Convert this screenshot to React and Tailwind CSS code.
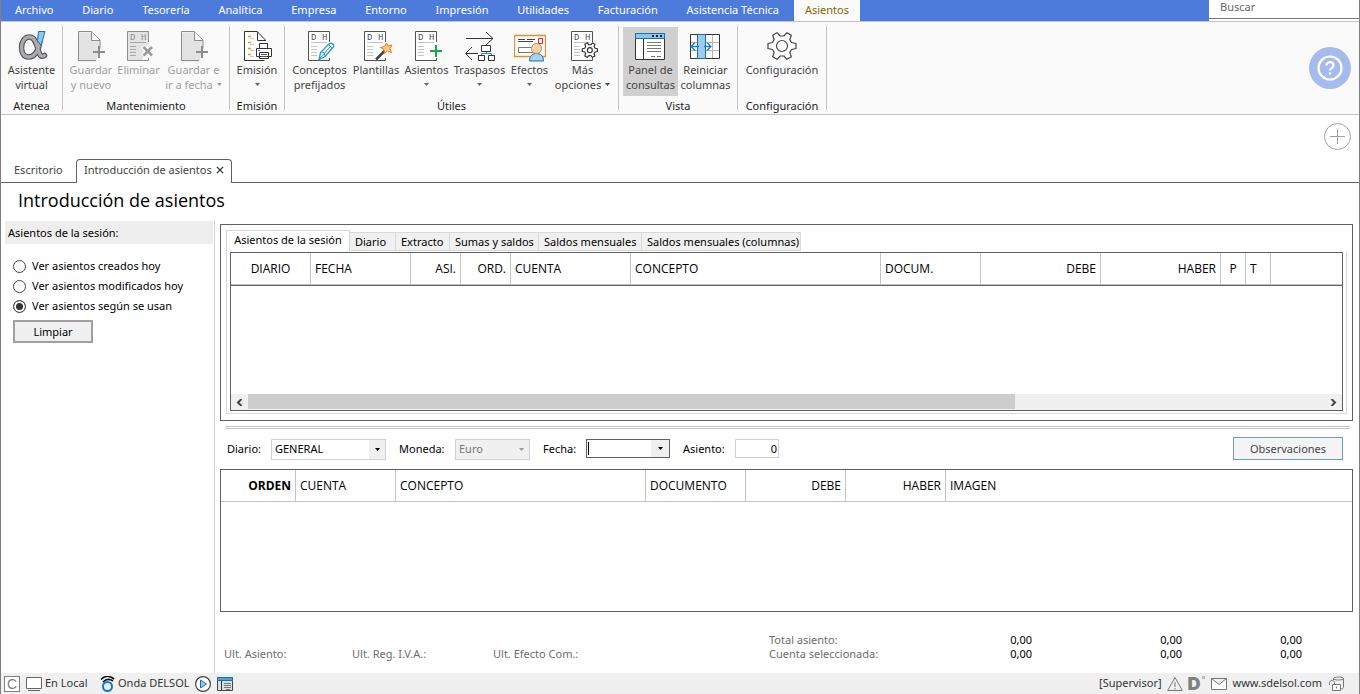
import React from 'react';

const menus = [
  'Archivo', 'Diario', 'Tesorería', 'Analítica', 'Empresa', 'Entorno',
  'Impresión', 'Utilidades', 'Facturación', 'Asistencia Técnica',
];

/* ---------- Ribbon icons ---------- */

function Svg({ children, size = 'w-8 h-8', box = '0 0 32 32' }) {
  return (
    <svg className={`${size} shrink-0`} viewBox={box} fill="none" aria-hidden="true">
      {children}
    </svg>
  );
}

const RIBBON_LOOP = 'M24 11c-1.500 9-5 16-11.500 16-4.500 0-7-3.800-7-9.500s3-10.500 8-10.500c6 0 7.500 8.500 9.500 15.500 .8 3 2.500 5 5.500 3';

function AlphaIcon() {
  return (
    <Svg>
      <path d={RIBBON_LOOP} stroke="#55565a" strokeWidth="5.500" strokeLinecap="round" />
      <path d={RIBBON_LOOP} stroke="#a9abad" strokeWidth="3.300" strokeLinecap="round" />
      <path d="M22.500 1.500h6.500l-4 14-3.500-5z" fill="#8fc8f0" stroke="#1a6fb0" />
    </Svg>
  );
}

function SavePageIcon() {
  return (
    <Svg>
      <path d="M24.500 19V10.500l-8-8H3.500v29h18" fill="#e3e3e3" />
      <path d="M25 18.500V10L16.500 1.500H3.500v29H21" stroke="#8c8c8c" />
      <path d="M16.500 1.500V10.500H25" fill="#fafafa" stroke="#8c8c8c" />
      <path d="M24 16v12M18 22h12" stroke="#8c8c8c" strokeWidth="2" />
    </Svg>
  );
}

/* Ledger sheet with the D / H header, shared by several buttons */
function Ledger({ stroke = '#505050', fill = '#ffffff', lines = '#c4c4c4' }) {
  return (
    <>
      <path d="M25.500 14V1.500h-21v29H19" fill={fill} />
      <path d="M25.500 12V1.500h-21v29h21V28" stroke={stroke} />
      <text x="7" y="10" fontSize="9" fill={stroke} className="font-['Liberation_Mono',monospace]">D</text>
      <text x="18" y="10" fontSize="9" fill={stroke} className="font-['Liberation_Mono',monospace]">H</text>
      <path d="M7 12.500h16M7 16.500h6M7 19.500h6M7 22.500h6M7 25.500h6" stroke={lines} />
    </>
  );
}

function DeleteIcon() {
  return (
    <Svg>
      <Ledger stroke="#8f8f8f" fill="#e3e3e3" lines="#a8a8a8" />
      <path d="M20 16.500l9 9M29 16.500l-9 9" stroke="#fafafa" strokeWidth="5" />
      <path d="M20.500 17l8.500 8.500M29 17l-8.500 8.500" stroke="#9a9a9a" strokeWidth="2.500" />
    </Svg>
  );
}

function PrintIcon() {
  return (
    <Svg>
      <path d="M24.500 12V10l-8.500-8.500H3.500v29h12" fill="#fff" />
      <path d="M24.500 11V10L16 1.500H3.500v29h20" stroke="#333" />
      <path d="M16.500 1.500V10.500h8" stroke="#333" />
      <path d="M7 6.500h3M7 12.500h3M7 18.500h3M7 24.500h3" stroke="#f0971d" strokeWidth="1.500" />
      <path d="M9 8.500h4M9 14.500h4M9 20.500h4M9 26.500h4" stroke="#c8c8c8" />
      <path d="M18.500 18v-4.500h8V18M15.500 18.500h15v8h-15zM18.500 22.500h9v6h-9z" fill="#fff" stroke="#333" />
      <path d="M17 20.500h2" stroke="#2a7fd0" />
      <path d="M20 24.500h6M20 26.500h6" stroke="#555" />
    </Svg>
  );
}

function ConceptsIcon() {
  return (
    <Svg>
      <Ledger />
      <path d="M15 29.500l1.500-7L25 14c2-2 5.500 0 4.500 3L21 26.500z" fill="#fff" stroke="#1e9bd7" strokeWidth="1.300" />
      <path d="M16 28l10.500-11.500M17 22l3 .5 1 3.500M24.500 14.500l4 4" stroke="#1e9bd7" />
    </Svg>
  );
}

function WandIcon() {
  return (
    <Svg>
      <Ledger />
      <path d="M16 29.500l9.500-9.500" stroke="#444" strokeWidth="2.500" />
      <path d="M26.500 13l1.500 3 4-1-2 3.500 1.500 4-4-1.500-3 2.500-.5-4-3.500-2 4-1z" fill="#fbc98a" stroke="#e8791c" />
    </Svg>
  );
}

function EntryIcon() {
  return (
    <Svg>
      <Ledger />
      <path d="M25 15v12M19 21h12" stroke="#17a84a" strokeWidth="2" />
    </Svg>
  );
}

function TransferIcon() {
  return (
    <Svg>
      <path d="M2 8.500h27M22 2l7 6.500-7 6.500M14 23.500H2M8 17l-6.500 6.500L8 30" stroke="#333" />
      <path d="M22.500 21v3M17.500 25v-1.500h10V25" stroke="#1e8fd7" />
      <path d="M17.500 15.500h9v6h-9zM14.500 25.500h6v5h-6zM24.500 25.500h6v5h-6z" fill="#fff" stroke="#333" />
    </Svg>
  );
}

function EffectsIcon() {
  return (
    <Svg>
      <path d="M.5 5.500h31v21H.5z" fill="#fff" stroke="#e88a34" strokeWidth="1.300" />
      <path d="M4 9.500h7M4 11.500h15M13 9.500h8" stroke="#444" />
      <path d="M4.500 17.500h14v5h-14z" stroke="#777" />
      <path d="M24.500 8.500h4v5h-4z" stroke="#e02424" />
      <path d="M15.500 31c0-5 3-7.500 7-7.500s7 2.500 7 7.500z" fill="#a9d1f2" stroke="#1d6dab" />
      <circle cx="22.500" cy="18.500" r="5" fill="#fbd5ae" stroke="#dc8536" />
    </Svg>
  );
}

const GEAR = 'M13.500 2h5l1 4.500 3 1.700 4.300-1.500 2.500 4.300-3.300 3.200v3.600l3.300 3.200-2.500 4.300-4.300-1.500-3 1.700-1 4.500h-5l-1-4.500-3-1.700-4.300 1.500L2.700 21 6 17.800v-3.600L2.700 11l2.500-4.300 4.300 1.500 3-1.700z';

function OptionsIcon() {
  return (
    <Svg>
      <Ledger />
      <g transform="translate(31.500 11.500) scale(.54) rotate(90)">
        <path d={GEAR} fill="#fff" stroke="#333" strokeWidth="2.200" strokeLinejoin="round" />
        <circle cx="16" cy="16" r="4.500" stroke="#333" strokeWidth="2.200" />
      </g>
    </Svg>
  );
}

function PanelIcon({ size = 'w-8 h-8' }) {
  return (
    <Svg size={size}>
      <path d="M.5 3.500h29v26h-29z" fill="#fff" stroke="#333" />
      <path d="M.5 3.500h29v5h-29z" fill="#8cc5ee" stroke="#1a6fb0" />
      <path d="M17 6h2M21 6h2M25 6h2" stroke="#222" strokeWidth="2" />
      <path d="M8.500 9v20" stroke="#333" />
      <path d="M12 12.500h14M12 15.500h14M12 18.500h14M12 21.500h14M16 26.500h4M22 26.500h4" stroke="#777" />
    </Svg>
  );
}

function ColumnsIcon() {
  return (
    <Svg>
      <path d="M.5 4.500h29v24h-29z" fill="#fff" />
      <path d="M1 12.500h28M1 20.500h28M22.500 4v25" stroke="#b5b5b5" />
      <path d="M.5 4.500h29v24h-29z" stroke="#333" />
      <path d="M7.500 4.500h8v24h-8z" fill="#9ccbf0" stroke="#1a6fb0" />
      <path d="M9 16.500H2M5 12.500l-4 4 4 4M14 16.500h7M17 12.500l4 4-4 4" stroke="#1583cc" strokeWidth="1.300" />
    </Svg>
  );
}

function GearIcon() {
  return (
    <Svg>
      <path d={GEAR} transform="rotate(90 16 16)" fill="#fff" stroke="#444" strokeWidth="1.200" strokeLinejoin="round" />
      <circle cx="16" cy="16" r="5.500" stroke="#444" strokeWidth="1.200" />
    </Svg>
  );
}

function Caret({ className = '' }) {
  return (
    <svg className={`inline-block w-[5px] h-[3px] ${className}`} viewBox="0 0 5 3" aria-hidden="true">
      <path d="M0 0h5L2.500 3z" fill="currentColor" />
    </svg>
  );
}

/* ---------- Ribbon ---------- */

const groups = [
  { name: 'Atenea', items: [{ lines: ['Asistente', 'virtual'], icon: AlphaIcon, width: 'w-[53px]' }] },
  {
    name: 'Mantenimiento',
    items: [
      { lines: ['Guardar', 'y nuevo'], icon: SavePageIcon, width: 'w-12', disabled: true },
      { lines: ['Eliminar'], icon: DeleteIcon, width: 'w-[47px]', disabled: true },
      { lines: ['Guardar e', 'ir a fecha'], icon: SavePageIcon, width: 'w-[63px]', disabled: true, caret: true },
    ],
  },
  { name: 'Emisión', items: [{ lines: ['Emisión', ''], icon: PrintIcon, width: 'w-[46px]', caret: true }] },
  {
    name: 'Útiles',
    items: [
      { lines: ['Conceptos', 'prefijados'], icon: ConceptsIcon, width: 'w-[61px]' },
      { lines: ['Plantillas'], icon: WandIcon, width: 'w-[52px]' },
      { lines: ['Asientos', ''], icon: EntryIcon, width: 'w-[49px]', caret: true },
      { lines: ['Traspasos', ''], icon: TransferIcon, width: 'w-[57px]', caret: true },
      { lines: ['Efectos', ''], icon: EffectsIcon, width: 'w-[43px]', caret: true },
      { lines: ['Más', 'opciones'], icon: OptionsIcon, width: 'w-[63px]', caret: true },
    ],
  },
  {
    name: 'Vista',
    items: [
      { lines: ['Panel de', 'consultas'], icon: PanelIcon, width: 'w-[55px]', active: true },
      { lines: ['Reiniciar', 'columnas'], icon: ColumnsIcon, width: 'w-[55px]' },
    ],
  },
  { name: 'Configuración', items: [{ lines: ['Configuración'], icon: GearIcon, width: 'w-20' }] },
];

function RibbonButton({ item }) {
  const Icon = item.icon;
  return (
    <button
      type="button"
      disabled={item.disabled}
      className={`${item.width} h-[69px] flex flex-col items-center pt-[3px] ${
        item.active ? 'bg-[#d0d0d0]' : ''
      } ${item.disabled ? 'text-[#a0a0a0]' : 'text-[#444]'}`}
    >
      <Icon />
      {item.lines.map((line, i) => (
        <span key={i} className="flex items-center h-[15px] leading-[15px] whitespace-nowrap">
          {line}
          {item.caret && i === 1 && <Caret className={line ? 'ml-1' : 'text-[#666]'} />}
        </span>
      ))}
    </button>
  );
}

function Ribbon() {
  return (
    <div className="flex items-center bg-[#fafafa] border-y border-[#c3c3c3]">
      <div className="flex py-1">
        {groups.map((group) => (
          <section key={group.name} className="px-1 pt-px border-r border-[#c3c3c3]">
            <div className="flex">
              {group.items.map((item) => (
                <RibbonButton key={item.lines.join(' ')} item={item} />
              ))}
            </div>
            <h2 className="h-[14px] leading-5 text-center text-[#222]">{group.name}</h2>
          </section>
        ))}
      </div>
      <button
        type="button"
        aria-label="Ayuda"
        className="ml-auto mr-2 w-[42px] h-[42px] rounded-full bg-[#a4bbec] flex items-center justify-center"
      >
        <Svg size="w-7 h-7" box="0 0 28 28">
          <circle cx="14" cy="14" r="11.500" stroke="#fff" strokeWidth="2.200" />
          <path d="M10.500 11.500c0-4.500 7-4.500 7 0 0 2.500-3.500 2.500-3.500 5" stroke="#fff" strokeWidth="2.200" />
          <circle cx="14" cy="19.500" r="1.300" fill="#fff" />
        </Svg>
      </button>
    </div>
  );
}

function MenuBar() {
  return (
    <div className="flex h-[21px] bg-[#4d7bdc]">
      <nav className="flex w-[859px]">
        {menus.map((menu) => (
          <a key={menu} href="#" className="grow pl-[13px] pr-[14px] leading-[20px] text-center text-white whitespace-nowrap">
            {menu}
          </a>
        ))}
        <a href="#" className="px-[11px] leading-[20px] bg-[#fafafa] text-[#8a6500] whitespace-nowrap">
          Asientos
        </a>
      </nav>
      <div className="ml-auto w-[150px] bg-white">
        <input
          type="text"
          aria-label="Buscar"
          placeholder="Buscar"
          className="block w-full h-[19px] px-[11px] pb-[5px] border-b border-[#777] placeholder:text-[#666] outline-none"
        />
      </div>
    </div>
  );
}

function DocumentTabs() {
  return (
    <div className="pt-2">
      <div className="flex justify-end pr-2">
        <button type="button" aria-label="Añadir">
          <Svg size="w-[27px] h-[27px]" box="0 0 27 27">
            <circle cx="13.500" cy="13.500" r="13" stroke="#a0a0a0" />
            <path d="M13.500 6v15M6 13.500h15" stroke="#a0a0a0" />
          </Svg>
        </button>
      </div>
      <div className="flex mt-[9px] text-[#444]">
        <a href="#" className="w-[75px] pl-[13px] leading-[22px] border-b border-[#606060]">Escritorio</a>
        <div className="flex items-center h-6 px-[7px] pb-[3px] gap-1 border border-b-0 border-[#606060] rounded-t-[4px]">
          <span className="whitespace-nowrap">Introducción de asientos</span>
          <button type="button" aria-label="Cerrar">
            <Svg size="w-2 h-2" box="0 0 9 9">
              <path d="M1 1l7 7M8 1L1 8" stroke="#333" strokeWidth="1.500" />
            </Svg>
          </button>
        </div>
        <div className="flex-1 border-b border-[#606060]" />
      </div>
    </div>
  );
}

/* ---------- Session panel ---------- */

function Sidebar() {
  const options = ['Ver asientos creados hoy', 'Ver asientos modificados hoy', 'Ver asientos según se usan'];
  return (
    <aside className="w-[214px] shrink-0 pl-1 border-r border-[#d5d5d5] text-black">
      <h2 className="h-[23px] pl-[3px] mr-px leading-[23px] bg-[#eee]">Asientos de la sesión:</h2>
      <div className="pl-2 pt-3">
        {options.map((option, i) => (
          <label key={option} className="flex items-center h-5 gap-[6px]">
            <input
              type="radio"
              name="sesion"
              defaultChecked={i === 2}
              className="appearance-none w-[13px] h-[13px] rounded-full border border-[#444] bg-white checked:bg-[#333] checked:shadow-[inset_0_0_0_2px_white]"
            />
            {option}
          </label>
        ))}
        <button type="button" className="w-20 h-[23px] mt-1 pt-px border-2 border-[#a0a0a0] bg-[#f0f0f0]">
          Limpiar
        </button>
      </div>
    </aside>
  );
}

const queryTabs = [
  { name: 'Diario', width: 'w-[46px]' },
  { name: 'Extracto', width: 'w-[54px]' },
  { name: 'Sumas y saldos', width: 'w-[89px]' },
  { name: 'Saldos mensuales', width: 'w-[103px]' },
  { name: 'Saldos mensuales (columnas)', width: 'w-[159px]' },
];

const queryColumns = [
  { name: 'DIARIO', width: 'w-20', align: 'text-center' },
  { name: 'FECHA', width: 'w-[100px]', align: 'text-left' },
  { name: 'ASI.', width: 'w-[50px]', align: 'text-right' },
  { name: 'ORD.', width: 'w-[50px]', align: 'text-right' },
  { name: 'CUENTA', width: 'w-[120px]', align: 'text-left' },
  { name: 'CONCEPTO', width: 'w-[250px]', align: 'text-left' },
  { name: 'DOCUM.', width: 'w-[100px]', align: 'text-left' },
  { name: 'DEBE', width: 'w-[120px]', align: 'text-right' },
  { name: 'HABER', width: 'w-[120px]', align: 'text-right' },
  { name: 'P', width: 'w-[25px]', align: 'text-center' },
  { name: 'T', width: 'w-[25px]', align: 'text-left' },
];

const entryColumns = [
  { name: 'ORDEN', width: 'w-[75px]', align: 'text-right', bold: true },
  { name: 'CUENTA', width: 'w-[100px]', align: 'text-left' },
  { name: 'CONCEPTO', width: 'w-[250px]', align: 'text-left' },
  { name: 'DOCUMENTO', width: 'w-[100px]', align: 'text-left' },
  { name: 'DEBE', width: 'w-[100px]', align: 'text-right' },
  { name: 'HABER', width: 'w-[100px]', align: 'text-right' },
];

function HeaderTable({ columns, last }) {
  return (
    <table className="w-full table-fixed border-separate border-spacing-0 text-xs text-black font-['Open_Sans','Noto_Sans',sans-serif]">
      <thead>
        <tr>
          {columns.map((col) => (
            <th
              key={col.name}
              className={`${col.width} ${col.align} ${col.bold ? 'font-bold' : 'font-normal'} h-8 px-1 border-r border-b border-[#c3c3c3]`}
            >
              {col.name}
            </th>
          ))}
          <th className="h-8 px-1 border-b border-[#c3c3c3] text-left font-normal">{last}</th>
        </tr>
      </thead>
    </table>
  );
}

function QueryPanel() {
  return (
    <section className="border border-[#606060] px-[5px] pt-[5px] pb-[6px]">
      <div className="flex items-end text-black">
        <button type="button" className="w-[124px] h-[21px] pb-px border border-b-0 border-[#d5d5d5] bg-white whitespace-nowrap">
          Asientos de la sesión
        </button>
        {queryTabs.map((tab) => (
          <button
            key={tab.name}
            type="button"
            className={`${tab.width} h-[19px] pl-[5px] pt-px text-left whitespace-nowrap bg-[#f0f0f0] border border-l-0 border-[#d9d9d9]`}
          >
            {tab.name}
          </button>
        ))}
      </div>
      <div className="p-[3px] pb-[2px] pt-px border-x border-b border-[#d9d9d9]">
        <div className="border border-[#606060]">
          <div className="border-b border-[#606060]">
            <HeaderTable columns={queryColumns} />
          </div>
          <div className="h-[108px] bg-white" />
          <div className="flex items-center h-4 bg-[#f0f0f0]">
            <button type="button" aria-label="Desplazar a la izquierda" className="w-[17px] flex justify-center">
              <Svg size="w-[7px] h-[7px]" box="0 0 7 7">
                <path d="M5.500 0L2 3.500 5.500 7" stroke="#444" strokeWidth="2" />
              </Svg>
            </button>
            <div className="flex-1 h-full">
              <div className="w-[71.2%] h-[15px] bg-[#cdcdcd]" />
            </div>
            <button type="button" aria-label="Desplazar a la derecha" className="w-[17px] flex justify-center">
              <Svg size="w-[7px] h-[7px]" box="0 0 7 7">
                <path d="M1.500 0L5 3.500 1.500 7" stroke="#444" strokeWidth="2" />
              </Svg>
            </button>
          </div>
        </div>
      </div>
    </section>
  );
}

function EntryForm() {
  return (
    <form className="flex items-start pl-[7px] pr-[10px] pt-2 text-black">
      <label htmlFor="diario" className="w-11 mt-[2px] leading-5">Diario:</label>
      <div className="relative mt-[2px] w-[115px]">
        <select id="diario" className="appearance-none block w-full h-[21px] pl-[3px] border border-[#d0d0d0] bg-white">
          <option>GENERAL</option>
        </select>
        <span className="absolute right-px top-px w-4 h-[19px] flex items-center justify-center bg-[#f0f0f0] pointer-events-none">
          <Caret />
        </span>
      </div>
      <label htmlFor="moneda" className="ml-[13px] w-14 mt-[2px] leading-5">Moneda:</label>
      <div className="relative mt-[2px] w-[75px]">
        <select
          id="moneda"
          disabled
          className="appearance-none block w-full h-[21px] pl-[3px] border border-[#d0d0d0] bg-[#f0f0f0] text-[#777] opacity-100"
        >
          <option>Euro</option>
        </select>
        <span className="absolute right-px top-px w-4 h-[19px] flex items-center justify-center text-[#999] pointer-events-none">
          <Caret />
        </span>
      </div>
      <label htmlFor="fecha" className="ml-[13px] w-[43px] mt-[2px] leading-5">Fecha:</label>
      <div className="flex items-center mt-[2px] w-[84px] h-[19px] border border-[#606060]">
        <span className="ml-px w-px h-[13px] bg-black" />
        <input id="fecha" type="text" className="flex-1 min-w-0 h-full outline-none" />
        <button type="button" aria-label="Abrir calendario" className="w-[18px] h-full flex items-center justify-center bg-[#f0f0f0]">
          <Caret />
        </button>
      </div>
      <label htmlFor="asiento" className="ml-[13px] w-[52px] mt-[2px] leading-5">Asiento:</label>
      <input
        id="asiento"
        type="text"
        defaultValue="0"
        className="mt-[2px] w-11 h-[19px] px-px pb-px border border-[#d0d0d0] text-right outline-none"
      />
      <button type="button" className="ml-auto w-[110px] h-[23px] pt-px border border-[#6f97e2] bg-[#f4f4f4] text-[#444]">
        Observaciones
      </button>
    </form>
  );
}

function Totals() {
  return (
    <footer className="flex items-end h-[61px] pb-3 pl-1 leading-[14px] text-[#6d6d6d]">
      <span className="w-32">Ult. Asiento:</span>
      <span className="w-[141px]">Ult. Reg. I.V.A.:</span>
      <span className="w-[276px]">Ult. Efecto Com.:</span>
      <div className="flex flex-col">
        {['Total asiento:', 'Cuenta seleccionada:'].map((label) => (
          <div key={label} className="flex">
            <span className="w-[143px]">{label}</span>
            <span className="w-[120px] text-right text-black">0,00</span>
            <span className="w-[150px] text-right text-black">0,00</span>
            <span className="w-[120px] text-right text-black">0,00</span>
          </div>
        ))}
      </div>
    </footer>
  );
}

function StatusBar() {
  return (
    <div className="flex items-center h-[21px] px-[3px] bg-[#f0f0f0] text-[#333]">
      <span className="w-4 h-4 flex items-center justify-center border border-[#808080] bg-white text-[#808080] text-sm font-['Liberation_Sans',sans-serif]">
        C
      </span>
      <Svg size="w-4 h-4 ml-[6px]" box="0 0 16 16">
        <path d="M.5 1.500h15v11H.5z" fill="#fff" stroke="#666" />
        <path d="M2 14.500h12" stroke="#666" />
      </Svg>
      <span className="ml-[3px] w-[55px]">En Local</span>
      <Svg size="w-4 h-4" box="0 0 16 16">
        <circle cx="7.500" cy="10.500" r="4.500" stroke="#0c78cf" strokeWidth="2" />
        <path d="M1 3.500c4-4 9-4 13-.5M3 6c3-3 7-3 10-1" stroke="#111" strokeWidth="1.700" />
      </Svg>
      <span className="ml-[2px] mr-[5px]">Onda DELSOL</span>
      <Svg size="w-4 h-4" box="0 0 16 16">
        <circle cx="8" cy="8" r="7.400" fill="#fff" stroke="#444" strokeWidth="1.200" />
        <path d="M5.500 4l6 4-6 4z" fill="#8fc8f0" stroke="#1a6fb0" />
      </Svg>
      <Svg size="w-4 h-4 ml-[6px]" box="0 0 16 16">
        <path d="M.5 1.500h15v13H.5z" fill="#ddd" stroke="#444" />
        <path d="M.5 1.500h15v3H.5z" fill="#4ba0dd" stroke="#1a6fb0" />
        <path d="M4.500 5v9" stroke="#333" />
        <path d="M7 7.500h7M7 9.500h7M7 11.500h7M9 13.500h4" stroke="#777" />
      </Svg>

      <span className="ml-auto">[Supervisor]</span>
      <Svg size="w-4 h-4 ml-[5px]" box="0 0 16 16">
        <path d="M8 1.500l7.300 13H.7z" stroke="#777" />
        <path d="M8 6v5M8 12v1.500" stroke="#777" />
      </Svg>
      <span className="flex items-start ml-[5px] w-[17px] h-4 leading-4 text-lg font-black text-[#808080] font-['Inter',sans-serif]">
        D
        <span className="w-[3px] h-[3px] ml-px bg-[#bbb]" />
      </span>
      <Svg size="w-4 h-4 ml-[6px]" box="0 0 16 16">
        <path d="M.5 2.500h15v11H.5zM.5 2.500L8 8.500l7.500-6" fill="#fff" stroke="#777" />
      </Svg>
      <a href="#" className="ml-[6px] mr-[7px]">www.sdelsol.com</a>
      <Svg size="w-4 h-4 mr-[11px]" box="0 0 16 16">
        <path d="M4.500 4V2.500c0-2 10-2 10 0v9c0 1-1.500 1.500-3 1.500M4.500 2.500c0 2 10 2 10 0" stroke="#777" />
        <path d="M3.500 8.500h8v6h-8z" fill="#fff" stroke="#777" />
        <path d="M.5 9V6.500c0-2.500 5-2.500 5 0V8M7.500 10.500v2" stroke="#777" />
      </Svg>
    </div>
  );
}

export default function App() {
  return (
    <div className="min-h-screen flex flex-col border-x border-[#808080] bg-white text-[11px] font-['Noto_Sans','Open_Sans',sans-serif]">
      <MenuBar />
      <Ribbon />
      <DocumentTabs />
      <h1 className="pl-[17px] h-[38px] leading-[35px] text-lg text-black font-['Open_Sans','Noto_Sans',sans-serif]">Introducción de asientos</h1>
      <main className="flex flex-1">
        <Sidebar />
        <div className="flex flex-col flex-1 min-w-0 pl-[5px] pr-[6px] pt-[3px]">
          <QueryPanel />
          <div className="h-[3px] mt-[5px] ml-[5px] mr-[3px] border-y border-[#c3c3c3]" />
          <EntryForm />
          <div className="flex-1 mt-[9px] border border-[#606060]">
            <HeaderTable columns={entryColumns} last="IMAGEN" />
          </div>
          <Totals />
        </div>
      </main>
      <StatusBar />
    </div>
  );
}
